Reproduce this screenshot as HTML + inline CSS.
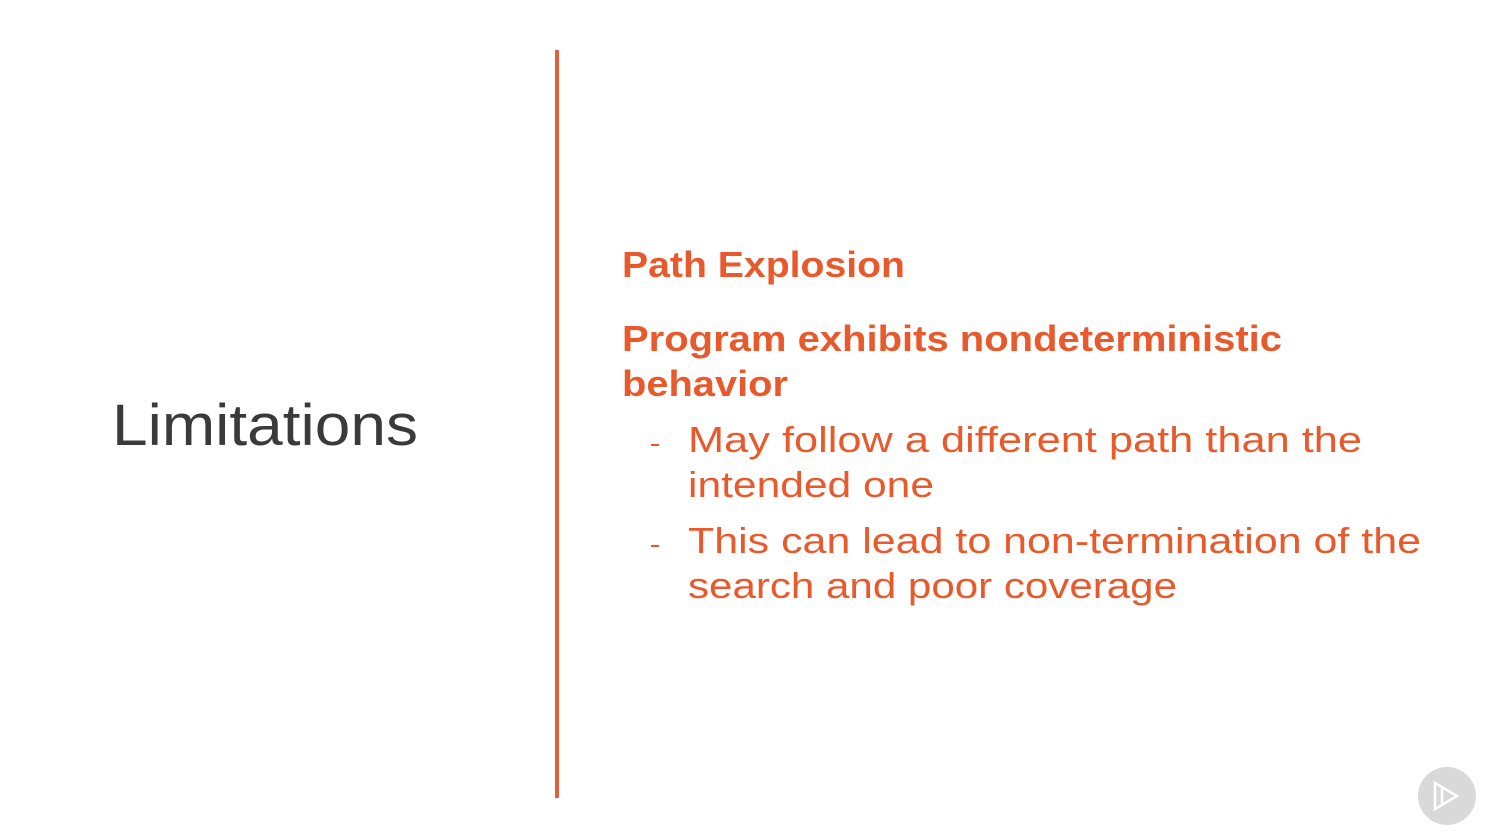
<!DOCTYPE html>
<html><head><meta charset="utf-8"><style>
html,body{margin:0;padding:0;background:#fff;}
svg{display:block}
</style></head><body>
<svg width="1499" height="833" viewBox="0 0 1499 833" xmlns="http://www.w3.org/2000/svg">
<rect width="1499" height="833" fill="#fff"/>
<rect x="555" y="50" width="4" height="748" fill="#e0603a"/>
<text x="112" y="445" font-family="Liberation Sans, sans-serif" font-size="58" font-weight="300" fill="#3a3a3a" textLength="306" lengthAdjust="spacingAndGlyphs">Limitations</text>
<g font-family="Liberation Sans, sans-serif" fill="#e85a2c">
<text x="622" y="277" font-size="36" font-weight="bold" textLength="283" lengthAdjust="spacingAndGlyphs">Path Explosion</text>
<text x="622" y="351" font-size="36" font-weight="bold" textLength="660" lengthAdjust="spacingAndGlyphs">Program exhibits nondeterministic</text>
<text x="622" y="396" font-size="36" font-weight="bold" textLength="166" lengthAdjust="spacingAndGlyphs">behavior</text>
<rect x="651" y="444" width="8" height="2"/>
<text x="688" y="452" font-size="36" textLength="674" lengthAdjust="spacingAndGlyphs">May follow a different path than the</text>
<text x="688" y="497" font-size="36" textLength="246" lengthAdjust="spacingAndGlyphs">intended one</text>
<rect x="651" y="545" width="8" height="2"/>
<text x="688" y="553" font-size="36" textLength="733" lengthAdjust="spacingAndGlyphs">This can lead to non-termination of the</text>
<text x="688" y="598" font-size="36" textLength="489" lengthAdjust="spacingAndGlyphs">search and poor coverage</text>
</g>
<circle cx="1447" cy="796" r="29" fill="#d9d9d9"/>
<g fill="none" stroke="#fff" stroke-width="2.5" stroke-linejoin="miter">
<path d="M1435 783 L1435 809 L1457 796 Z"/>
<path d="M1442 788 L1442 804"/>
</g>
</svg>
</body></html>
